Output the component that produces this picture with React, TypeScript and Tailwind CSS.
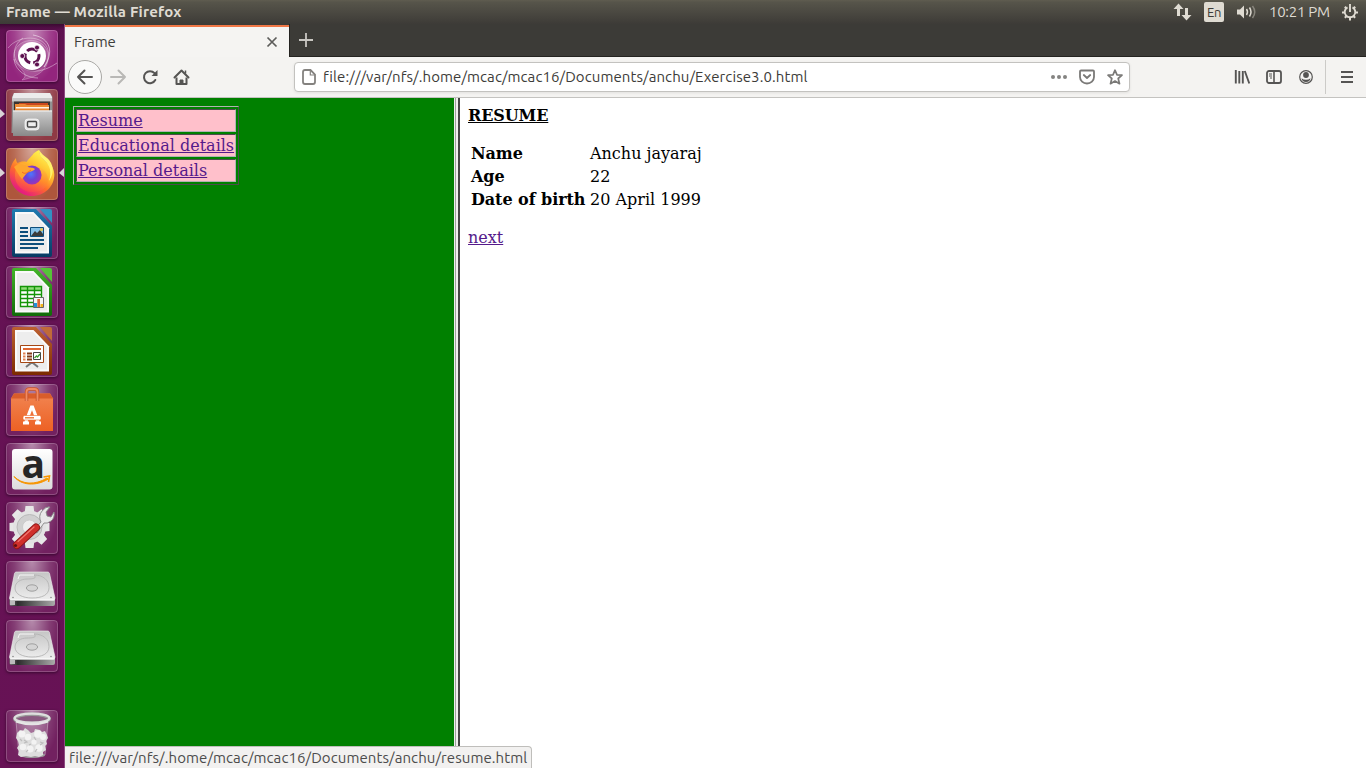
import type { ReactNode } from "react";

const UI = "font-['Ubuntu','Noto_Sans',sans-serif]";

function Tile({ tint, children, running, active }: { tint: string; children: ReactNode; running?: boolean; active?: boolean }) {
  return (
    <div className="relative flex h-[52px] w-full shrink-0 justify-center">
      {running && (
        <svg className="absolute left-0 top-[20px]" width="5" height="10" viewBox="0 0 5 10">
          <path d="M0 0 5 5 0 9z" fill="#d9d4d7" />
        </svg>
      )}
      <div className={`relative mr-px h-[52px] w-[52px] rounded-[4px] shadow-[0_1px_3px_rgba(20,0,20,0.55)] ${tint}`}>
        <div className="absolute inset-0 rounded-[4px] bg-[radial-gradient(ellipse_at_50%_0%,rgba(255,255,255,0.48)_0%,rgba(255,255,255,0.13)_48%,rgba(255,255,255,0)_75%)]" />
        <svg className="relative block overflow-visible" width="52" height="52" viewBox="0 0 52 52">
          {children}
        </svg>
        <div className="absolute inset-0 rounded-[4px] border border-white/20" />
      </div>
      {active && (
        <svg className="absolute right-0 top-[20px]" width="5" height="10" viewBox="0 0 5 10">
          <path d="M5 0 0 5 5 9z" fill="#d9d4d7" />
        </svg>
      )}
    </div>
  );
}

function Doc({ id, light, dark, fold, children }: { id: string; light: string; dark: string; fold: string; children: ReactNode }) {
  return (
    <>
      <defs>
        <linearGradient id={id} x1="0" y1="0" x2="0" y2="1">
          <stop offset="0" stopColor={light} />
          <stop offset="1" stopColor={dark} />
        </linearGradient>
      </defs>
      <path d="M8 2h22l16 17v29q0 2-2 2H8q-2 0-2-2V4q0-2 2-2z" fill={`url(#${id})`} />
      <path d="M34 2h10q2 0 2 2v12z" fill={fold} />
      <path d="M9 5h18.500L43 21.300V46.500H9z" fill="#fafafa" />
      <path d="M11 7v37.500h30V22L27 7z" fill="#ededed" />
      {children}
    </>
  );
}

function Drive({ id }: { id: string }) {
  return (
    <>
      <defs>
        <linearGradient id={id} x1="0" y1="0" x2="0" y2="1">
          <stop offset="0" stopColor="#c5c5c5" />
          <stop offset="1" stopColor="#eeeeee" />
        </linearGradient>
        <linearGradient id={id + "f"}>
          <stop offset="0" stopColor="#777" />
          <stop offset=".18" stopColor="#2c2c2c" />
          <stop offset="1" stopColor="#aaa" />
        </linearGradient>
      </defs>
      <path d="M3.500 37h45.500v6q0 2-2 2H5.500q-2 0-2-2z" fill={`url(#${id}f)`} />
      <path d="M10 11h32q1 0 1.500 1.500L49 37q0 2-2 2H5.500q-2 0-2-2L8.500 12.500Q9 11 10 11z" fill={`url(#${id})`} stroke="#f4f4f4" strokeWidth=".6" />
      <path d="M28 14c9 0 15 5 15 12.500S36 37 26 37 9 33 9 27s6-9 12-9c7 0 10-1 7-4z" fill="none" stroke="#b4b4b4" strokeWidth=".9" />
      <path d="M12 18l1.500-4H28" fill="none" stroke="#f7f7f7" />
      <ellipse cx="26" cy="27" rx="5.600" ry="3.200" fill="#d4d4d4" stroke="#999" strokeWidth=".9" />
      <circle cx="7" cy="36.500" r=".8" fill="#888" />
      <circle cx="45" cy="36.500" r=".8" fill="#888" />
      <path d="M4 39h44.500" stroke="#fff" />
      <path d="M4 40v4h5v-4z" fill="#bbb" />
    </>
  );
}

function Launcher() {
  return (
    <nav className="flex w-[65px] shrink-0 flex-col gap-[7px] border-r border-[#8c4a80] bg-[linear-gradient(180deg,#3c0a33_0px,#5e1050_6px,#641253_30px,#671255_100%)] pt-[6px]">
      <Tile tint="bg-[#93257d]">
        <g fill="none" stroke="#fff" strokeWidth="1">
          <path d="M2 18C12 5 38 4 42 20c2 8-2 14-4 17" strokeOpacity=".35" />
          <path d="M8 30C4 10 34 2 42 22c2 16-7 24-26 28C24 44 14 40 8 30z" fill="#fff" fillOpacity=".14" strokeOpacity=".25" />
          <path d="M27 5c18 3 21 18 11 32" strokeOpacity=".5" />
          <path d="M17 8C5 16 6 32 17 38c10 6 22 3 34-5" strokeOpacity=".4" />
          <path d="M8 29c1 12 13 19 24 19" strokeOpacity=".4" />
        </g>
        <circle cx="26" cy="27" r="14.200" fill="#43063a" fillOpacity=".35" />
        <circle cx="26" cy="26" r="14" fill="#fff" />
        <path d="M26 19a7 7 0 0 1 7 7 7 7 0 0 1-7 7 7 7 0 0 1-7-7 7 7 0 0 1 7-7" fill="none" stroke="#5d114f" strokeWidth="3" strokeDasharray="11.600 3.060" strokeDashoffset="-9" />
        <g fill="#5d114f" stroke="#fff" strokeWidth=".8">
          <circle cx="16.300" cy="26" r="2.500" />
          <circle cx="31" cy="17.600" r="2.500" />
          <circle cx="31" cy="34.500" r="2.500" />
        </g>
      </Tile>
      <Tile tint="bg-[#8f3a45]" running>
        <defs>
          <linearGradient id="cab" x1="0" y1="0" x2="0" y2="1">
            <stop offset="0" stopColor="#cccccc" />
            <stop offset="1" stopColor="#898989" />
          </linearGradient>
        </defs>
        <path d="M6 8 8 4h36l2.500 4v36H5.500z" fill="#929292" />
        <path d="M6.500 8 8 4h36l2 4v3H6z" fill="#ececec" />
        <path d="M6 9h40v3.500H6z" fill="#c9c9c9" />
        <path d="M8 12.500h36V22H8z" fill="#3a3532" />
        <path d="M13 14h29v3H13z" fill="#c9471f" />
        <path d="M9 15h10l2 1h22v6H9z" fill="#ec8a35" />
        <path d="M10 18h33v1.500H10z" fill="#fff4e7" />
        <path d="M7 21.500h39V47H7z" fill="url(#cab)" />
        <path d="M7 22h39" stroke="#f4f4f4" />
        <rect x="19" y="30" width="14" height="11" rx="3" fill="#e5e5e5" stroke="#fafafa" strokeWidth=".7" />
        <rect x="21.500" y="32.500" width="9" height="5.500" rx="1" fill="#eee" stroke="#484848" strokeWidth="1.400" />
      </Tile>
      <Tile tint="bg-[#ae563c]" running active>
        <defs>
          <linearGradient id="ff" x1=".8" y1=".1" x2=".25" y2=".95">
            <stop offset="0" stopColor="#fff44f" />
            <stop offset=".35" stopColor="#ffbd2d" />
            <stop offset=".62" stopColor="#ff6a2b" />
            <stop offset="1" stopColor="#e31587" />
          </linearGradient>
          <linearGradient id="ffb" x1=".8" y1="0" x2=".3" y2="1">
            <stop offset="0" stopColor="#ffd23c" />
            <stop offset=".5" stopColor="#ff8a2b" />
            <stop offset="1" stopColor="#f8325c" />
          </linearGradient>
          <radialGradient id="ffg" cx=".45" cy=".45" r=".6">
            <stop offset="0" stopColor="#4d76ff" />
            <stop offset=".5" stopColor="#6d42d4" />
            <stop offset="1" stopColor="#a82fb0" />
          </radialGradient>
        </defs>
        <path d="M10 10c0 2 .5 4 1.500 5 2-1 6-2 9-1 3-4 5-6 6-7 1-2 4-4 6.500-5C33 4 34 8 37 11c2 2 4 3 4.500 5 0-1 .5-2 .5-3 4 4 6.300 9 6.300 13.500C48.300 39 38 48 26 48S3.700 38 3.700 26c0-6 2.500-11.500 6.300-16z" fill="url(#ff)" />
        <path d="M33 2c0 4 1.500 7 5 10 6 5 8 12 5 21 7-10 3-19-2-23-3-2-6-5-8-8z" fill="#fff36b" />
        <path d="M11 17c4-3 9-2 11 2h8c7 0 12 6 12 13 0 8-7 12-16 12S9 37 9 28c0-5 1-8 2-11z" fill="url(#ffb)" />
        <circle cx="26" cy="27" r="9.600" fill="url(#ffg)" />
        <path d="M8 19c4-4 12-3 14 0 2 1 5 0 7 2-2 3-6 2-8 4-2 2-3 4-5 6-3-3-5-8-8-12z" fill="#ffa62e" />
        <path d="M16 24c3 3 6 0 9-2" fill="none" stroke="#f06a2c" strokeWidth="1" />
      </Tile>
      <Tile tint="bg-[#701f60]">
        <Doc id="writer" light="#1f7bb0" dark="#073a63" fold="#3391c2">
          <path d="M14 21h8M14 25h8M14 29h8M14 33h24M14 37h24M14 41h18" stroke="#0e4f7c" strokeWidth="2" />
          <path d="M24.500 20.500h13v9h-13z" fill="#86c2e8" stroke="#0e4f7c" />
          <path d="m25 29 4-5 2 2 3-3 3 4v2z" fill="#3b3b3b" />
          <circle cx="35.500" cy="22.500" r="1.500" fill="#e5c84c" />
        </Doc>
      </Tile>
      <Tile tint="bg-[#701f60]">
        <Doc id="calc" light="#43b528" dark="#106b08" fold="#55c338">
          <path d="M14 20.500h22v20H14z" fill="#fff" />
          <path d="M14 20.500h22v4H14z" fill="#90dc79" />
          <path d="M14.500 20.500h21v20h-21zM14.500 24.500h21M14.500 28.500h21M14.500 32.500h21M14.500 36.500h21M21.500 20.500v20M28.500 20.500v20" fill="none" stroke="#149507" strokeWidth="1.400" />
          <path d="M27.500 31.500h10v10h-10z" fill="#f5f5f5" stroke="#666" />
          <path d="M28 37h3v4h-3z" fill="#2491d8" />
          <path d="M31.300 33h2.700v8h-2.700z" fill="#e16331" />
          <path d="M34.500 38h2.500v3h-2.500z" fill="#f3b31b" />
        </Doc>
      </Tile>
      <Tile tint="bg-[#701f60]">
        <Doc id="impress" light="#bd6030" dark="#7c2b00" fold="#c06a39">
          <path d="m20 42 5-4h2l5 4" fill="none" stroke="#777" strokeWidth="2" />
          <path d="M14.500 20.500h23v17h-23z" fill="#fff" stroke="#a54714" />
          <path d="M17 24h18" stroke="#df6631" strokeWidth="2" />
          <path d="M17 28.500h2.500M17 31.500h2.500M17 34.500h2.500" stroke="#e18152" strokeWidth="2" />
          <path d="M21 28.500h5M21 31.500h5M21 34.500h5" stroke="#843b18" strokeWidth="2" />
          <path d="M27.500 27.500h7v7h-7z" fill="#fff" stroke="#444" />
          <path d="m28.500 33 2-2 1 1 2.500-3" fill="none" stroke="#3b9c31" strokeWidth="1.300" />
        </Doc>
      </Tile>
      <Tile tint="bg-[#722160]">
        <defs>
          <linearGradient id="bag" x1="0" y1="0" x2="0" y2="1">
            <stop offset="0" stopColor="#f18552" />
            <stop offset="1" stopColor="#ed6124" />
          </linearGradient>
        </defs>
        <path d="M8 9.500h36l3 5V47H5V14.500z" fill="url(#bag)" />
        <path d="M8 9.500h36l3 5H5z" fill="#d95d2b" />
        <path d="M20.500 17V8q0-3 3-3h5q3 0 3 3v9" fill="none" stroke="#c8532a" strokeWidth="3.500" />
        <path d="M20.500 17V8q0-3 3-3h5q3 0 3 3v9" fill="none" stroke="#f18a62" strokeWidth="1.800" />
        <path d="m19.500 39 6-16h1l6 16M17 39h6M29 39h6" fill="none" stroke="#fff" strokeWidth="3.200" />
        <rect x="17" y="31.500" width="18" height="4.500" rx="1.500" fill="#fff" stroke="#ed6829" strokeWidth=".6" />
        <path d="M19 33.800h9" stroke="#ed6829" strokeWidth="1.300" />
      </Tile>
      <Tile tint="bg-[#722160]">
        <defs>
          <linearGradient id="am" x1="0" y1="0" x2="0" y2="1">
            <stop offset="0" stopColor="#fff" />
            <stop offset="1" stopColor="#dcdcdc" />
          </linearGradient>
        </defs>
        <rect x="6" y="6" width="40.500" height="40.500" rx="3" fill="url(#am)" />
        <text x="15.500" y="34.500" fontSize="39" fontWeight="700" fontFamily="Open Sans, sans-serif" fill="#262626">a</text>
        <path d="M8 33.500c8 8 21 9 33 1.500l1 1.200C30 43.500 15 42.500 8 33.500z" fill="#f79500" stroke="#f79500" />
        <path d="m37.500 34 6-1-1 6" fill="none" stroke="#f79500" strokeWidth="1.600" />
      </Tile>
      <Tile tint="bg-[#722160]">
        <g transform="translate(23.500 25)">
          <g fill="#e7e7e7">
            <path d="M-4-21h8l1 8H-5zM-4 21h8l1-8H-5z" />
            <path d="M-4-21h8l1 8H-5zM-4 21h8l1-8H-5z" transform="rotate(45)" />
            <path d="M-4-20h8l1 8H-5zM-4 20h8l1-8H-5z" transform="rotate(90)" />
            <path d="M-4-21h8l1 8H-5zM-4 21h8l1-8H-5z" transform="rotate(135)" />
          </g>
          <circle r="16.500" fill="#e3e3e3" />
          <circle r="12.500" fill="#d0d0d0" stroke="#b9b9b9" />
          <circle r="7" fill="#eee" stroke="#ccc" />
        </g>
        <path d="m27 29 8-9q-3-6 1-11t8-4l-4 5 1 4 4 1 3-5q1 6-3 9t-7 2l-7 10z" fill="#e9e9e9" stroke="#878787" strokeWidth=".9" />
        <path d="M30 25.500 11 43" stroke="#8e1717" strokeWidth="8" strokeLinecap="round" />
        <path d="M30 25.500 11 43" stroke="#cf2f2b" strokeWidth="6.300" strokeLinecap="round" />
        <path d="M28 25 12 39.500" stroke="#ef7770" strokeWidth="1.200" strokeLinecap="round" />
        <circle cx="9.500" cy="43.500" r="1.600" fill="#5f1111" />
      </Tile>
      <Tile tint="bg-[#722160]">
        <Drive id="d1" />
      </Tile>
      <Tile tint="bg-[#722160]">
        <Drive id="d2" />
      </Tile>
      <div className="mt-[31px]">
        <Tile tint="bg-[#722160]">
          <path d="m10 11 3 34q13 5 26 0l3-34" fill="#fff" fillOpacity=".13" stroke="#fff" strokeOpacity=".35" />
          <ellipse cx="26" cy="45" rx="13" ry="3" fill="#9a9a9a" />
          <path d="m11 23 3-3 3 1 2-3 3 2 3 3 3-1 1-3 5 1 2 2 3-1 2 4 1 3-2 3 1 3-2 2 1 4-3 2v3l-4 2-4-1-4 1-5-1-5 1-3-2 1-4-2-3 2-3-1-4-2-3z" fill="#dedede" />
          <g fill="#f3f3f3">
            <circle cx="16" cy="24" r="3.500" />
            <circle cx="22" cy="27" r="3.200" />
            <circle cx="32" cy="24" r="3.800" />
            <circle cx="37" cy="27" r="3" />
            <circle cx="17" cy="37" r="3.300" />
            <circle cx="24" cy="39" r="3.600" />
            <circle cx="33" cy="38" r="3.700" />
            <circle cx="28" cy="32" r="2.600" />
          </g>
          <path d="m18 30 3 2-3 1M28 27l2 3M34 32l3 1-3 2M20 42l2-2M29 42l2-3M14 29l2 2M25 34l-2 1" fill="none" stroke="#bdbdbd" strokeWidth="1.200" />
          <ellipse cx="26" cy="8.800" rx="17.300" ry="4.600" fill="#8a5a80" stroke="#9a9a9a" strokeWidth="3.400" />
          <ellipse cx="26" cy="8.200" rx="17.300" ry="4.600" fill="none" stroke="#dedede" strokeWidth="2.400" />
          <path d="M10 11.500q16 5.500 32 0" fill="none" stroke="#e6e6e6" strokeWidth="2" />
        </Tile>
      </div>
    </nav>
  );
}

function TopPanel() {
  return (
    <header className={`flex h-6 shrink-0 items-center justify-between bg-[linear-gradient(180deg,#5f5c50_0,#56544a_10%,#3d3b37_100%)] pl-[6px] pr-[7px] text-[#dfdbd2] ${UI}`}>
      <span className="text-[15px] font-bold leading-6 tracking-[0.2px]">Frame — Mozilla Firefox</span>
      <div className="flex items-center">
        <svg width="19" height="18" viewBox="0 0 19 18" fill="#dfdbd2">
          <path d="M5.500 .5 10.500 6H7v7H4V6H.5zM13.500 17.500 8.500 12H12V5h3v7h3.500z" />
        </svg>
        <span className="ml-[12px] flex h-[20px] w-[20px] items-center justify-center rounded-[2px] bg-[#dfdbd2] text-[13px] leading-none tracking-[-0.3px] text-[#3c3b37]">En</span>
        <svg className="ml-[12px]" width="21" height="18" viewBox="0 0 21 18">
          <path d="M1 6.500h3l4-4v13l-4-4H1z" fill="#dfdbd2" />
          <path d="M10.500 6q2 3 0 6M13.500 4.500q3 4.500 0 9" fill="none" stroke="#dfdbd2" strokeWidth="1.500" />
          <path d="M16.500 3q4.500 6 0 12" fill="none" stroke="#88857c" strokeWidth="1.500" />
        </svg>
        <span className="ml-[12px] w-[61px] whitespace-nowrap text-[15px] leading-6 tracking-[-0.28px]">10:21 PM</span>
        <svg className="ml-[11px]" width="18" height="18" viewBox="0 0 18 18" fill="none" stroke="#dfdbd2">
          <path d="M6.500 4.300a5.300 5.300 0 1 0 5 0" strokeWidth="1.900" />
          <path d="M9 1v8" strokeWidth="1.900" />
          <path d="M3.800 3.800 5.500 5.500M1 9.500h3M3.800 14.800l1.600-1.600M9 14.500v3M14.200 14.800l-1.600-1.600M17 9.500h-3M14.200 3.800l-1.700 1.700" strokeWidth="2" />
        </svg>
      </div>
    </header>
  );
}

function TabStrip() {
  return (
    <div className={`flex h-[33px] shrink-0 ${UI}`}>
      <div className="flex w-[224px] flex-col bg-[#f5f4f2]">
        <div className="h-px bg-[#3c3b37]" />
        <div className="h-[2px] bg-[#f07746]" />
        <div className="flex h-[29px] items-center justify-between pl-[9px] pr-[11px] text-[15px] leading-none text-[#3e3d3a]">
          <span className="tracking-[-0.1px]">Frame</span>
          <svg width="12" height="12" viewBox="0 0 12 12">
            <path d="m1.500 1.500 9 9m0-9-9 9" stroke="#5d5c5a" strokeWidth="1.700" />
          </svg>
        </div>
      </div>
      <div className="flex flex-1 items-center border-b border-l border-[#242320] bg-[#3c3b37] pl-[8px]">
        <svg width="16" height="16" viewBox="0 0 16 16">
          <path d="M8 1v14M1 8h14" stroke="#c9c7c2" strokeWidth="1.800" />
        </svg>
      </div>
    </div>
  );
}

function Toolbar() {
  return (
    <div className={`flex h-[41px] shrink-0 items-center border-b border-[#c4c3c0] bg-[#f4f3f1] pl-[3px] ${UI}`}>
      <div className="flex h-[34px] w-[34px] items-center justify-center rounded-full border border-[#a9a8a5] bg-[#fafaf9]">
        <svg width="18" height="16" viewBox="0 0 18 16" fill="none" stroke="#555453" strokeWidth="2">
          <path d="M2 8h14M8.500 1.500 2 8l6.500 6.500" strokeLinecap="round" strokeLinejoin="round" />
        </svg>
      </div>
      <svg className="ml-[7px]" width="18" height="16" viewBox="0 0 18 16" fill="none" stroke="#b9b8b6" strokeWidth="2">
        <path d="M2 8h14M9.500 1.500 16 8l-6.500 6.500" strokeLinecap="round" strokeLinejoin="round" />
      </svg>
      <svg className="ml-[15px]" width="17" height="16" viewBox="0 0 17 16" fill="none" stroke="#555453" strokeWidth="2">
        <path d="M12.500 4.200A6 6 0 1 0 13.300 11" strokeLinecap="round" />
        <path d="M15.500 1v6h-6z" fill="#555453" stroke="none" />
      </svg>
      <svg className="ml-[14px]" width="17" height="17" viewBox="0 0 17 17" fill="none" stroke="#555453">
        <path d="M1.500 8.500 8.500 1.500l7 7" strokeWidth="2" strokeLinecap="round" strokeLinejoin="round" />
        <path d="M3.500 8.500V15h10V8.500" strokeWidth="2" strokeLinejoin="round" />
        <path d="M7 15.500V11h3v4.500z" fill="#555453" strokeWidth="1" />
        <path d="M12.500 1.500v3" strokeWidth="1.500" />
      </svg>
      <div className="ml-[104px] flex h-[30px] w-[836px] items-center rounded-[4px] border border-[#c3c2bf] bg-white pl-[7px] pr-[6px] shadow-[0_1px_3px_rgba(0,0,0,0.08)]">
        <svg width="14" height="16" viewBox="0 0 14 16" fill="none" stroke="#84827f" strokeWidth="1.800">
          <path d="M3 1h5.500L13 5.500V13q0 2-2 2H3q-2 0-2-2V3q0-2 2-2z" />
          <path d="M8.300 1.500V6H13" strokeWidth="1.200" />
        </svg>
        <span className="ml-[7px] flex-1 whitespace-nowrap text-[15px] leading-[20px] tracking-[0.09px] text-[#3d3c39]">file:///var/nfs/.home/mcac/mcac16/Documents/anchu/Exercise3.0.html</span>
        <svg width="18" height="6" viewBox="0 0 18 6" fill="#848381">
          <circle cx="3" cy="3" r="2" />
          <circle cx="9" cy="3" r="2" />
          <circle cx="15" cy="3" r="2" />
        </svg>
        <svg className="ml-[11px]" width="16" height="16" viewBox="0 0 16 16" fill="none" stroke="#7a7977" strokeWidth="1.800">
          <path d="M2 1.500h12q1 0 1 1V8a7 6.500 0 0 1-14 0V2.500q0-1 1-1z" strokeLinejoin="round" />
          <path d="m4.800 6 3.200 3 3.200-3" strokeLinecap="round" strokeLinejoin="round" />
        </svg>
        <svg className="ml-[12px]" width="16" height="16" viewBox="0 0 16 16" fill="none" stroke="#7a7977" strokeWidth="1.700">
          <path d="m8 1.200 2 4.600 5 .4-3.800 3.300L12.500 14.700 8 12l-4.500 2.700 1.300-5.200L1 6.200l5-.4z" strokeLinejoin="round" />
        </svg>
      </div>
      <svg className="ml-[104px]" width="16" height="14" viewBox="0 0 16 14" fill="none" stroke="#555453" strokeWidth="2">
        <path d="M1.800 0v13.500M5.300 1v12.500M8.800 1v12.500M10.800 1l4.500 12.500" strokeWidth="1.900" />
      </svg>
      <svg className="ml-[16px]" width="16" height="14" viewBox="0 0 16 14" fill="none" stroke="#555453">
        <rect x="1" y="1" width="14" height="12" rx="2" strokeWidth="1.800" />
        <path d="M8 1v12" strokeWidth="1.600" />
        <path d="M3 4h3M3 6h3M4 8h2" strokeWidth="1" />
      </svg>
      <svg className="ml-[17px]" width="14" height="14" viewBox="0 0 14 14">
        <circle cx="7" cy="7" r="6.300" fill="none" stroke="#555453" strokeWidth="1.200" />
        <circle cx="7" cy="5" r="2.900" fill="#555453" />
        <path d="M2.500 8.300q1.800 1.500 4.500 1.500t4.500-1.500Q11 12 7 12T2.500 8.300z" fill="#555453" />
      </svg>
      <div className="ml-[12px] h-[34px] w-px bg-[#cccbc8]" />
      <svg className="ml-[15px]" width="12" height="12" viewBox="0 0 12 12">
        <path d="M0 1h12M0 6h12M0 11h12" stroke="#555453" strokeWidth="1.800" />
      </svg>
    </div>
  );
}

const links = ["Resume", "Educational details", "Personal details"];
const rows = [
  ["Name", "Anchu jayaraj"],
  ["Age", "22"],
  ["Date of birth", "20 April 1999"],
];

function Frames() {
  return (
    <main className="relative flex flex-1 font-['DejaVu_Serif',serif] text-[16px] leading-[19px]">
      <section className="w-[389px] shrink-0 bg-[#008000] pl-[8px] pt-[8px]">
        <div className="flex w-[166px] flex-col gap-[2px] border border-b-[#4c4c4c] border-l-[#b2b2b2] border-r-[#4c4c4c] border-t-[#b2b2b2] p-[2px]">
          {links.map((l) => (
            <div key={l} className="h-[23px] whitespace-nowrap border border-b-[#b2b2b2] border-l-[#4c4c4c] border-r-[#b2b2b2] border-t-[#4c4c4c] bg-[#ffc0cb] p-px">
              <a className="text-[#551a8b] underline">{l}</a>
            </div>
          ))}
        </div>
      </section>
      <div className="flex w-[6px] shrink-0">
        <div className="w-px bg-[#eeeeee]" />
        <div className="w-px bg-[#a0a09e]" />
        <div className="w-[2px] bg-[#f0efed]" />
        <div className="w-[2px] bg-[#464646]" />
      </div>
      <section className="flex-1 bg-white pl-[8px] pt-[8px] text-black">
        <h1 className="font-bold tracking-[-0.1px] underline">RESUME</h1>
        <div className="mt-[18px] flex flex-col gap-[2px] pl-[3px]">
          {rows.map(([k, v]) => (
            <div key={k} className="flex h-[21px] items-center">
              <span className="w-[119px] whitespace-nowrap font-bold tracking-[-0.06px]">{k}</span>
              <span>{v}</span>
            </div>
          ))}
        </div>
        <p className="mt-[18px]">
          <a className="text-[#551a8b] underline">next</a>
        </p>
      </section>
      <div className={`absolute bottom-0 left-0 flex h-[22px] w-[467px] items-center whitespace-nowrap rounded-tr-[4px] border-r border-t border-[#bfbebb] bg-[#f2f1f0] pl-[4px] text-[15px] tracking-[0.09px] text-[#4c4c4c] ${UI}`}>
        file:///var/nfs/.home/mcac/mcac16/Documents/anchu/resume.html
      </div>
    </main>
  );
}

export default function App() {
  return (
    <div className="flex h-[768px] w-[1366px] flex-col overflow-hidden bg-white">
      <TopPanel />
      <div className="flex min-h-0 flex-1">
        <Launcher />
        <div className="flex min-w-0 flex-1 flex-col">
          <TabStrip />
          <Toolbar />
          <Frames />
        </div>
      </div>
    </div>
  );
}
